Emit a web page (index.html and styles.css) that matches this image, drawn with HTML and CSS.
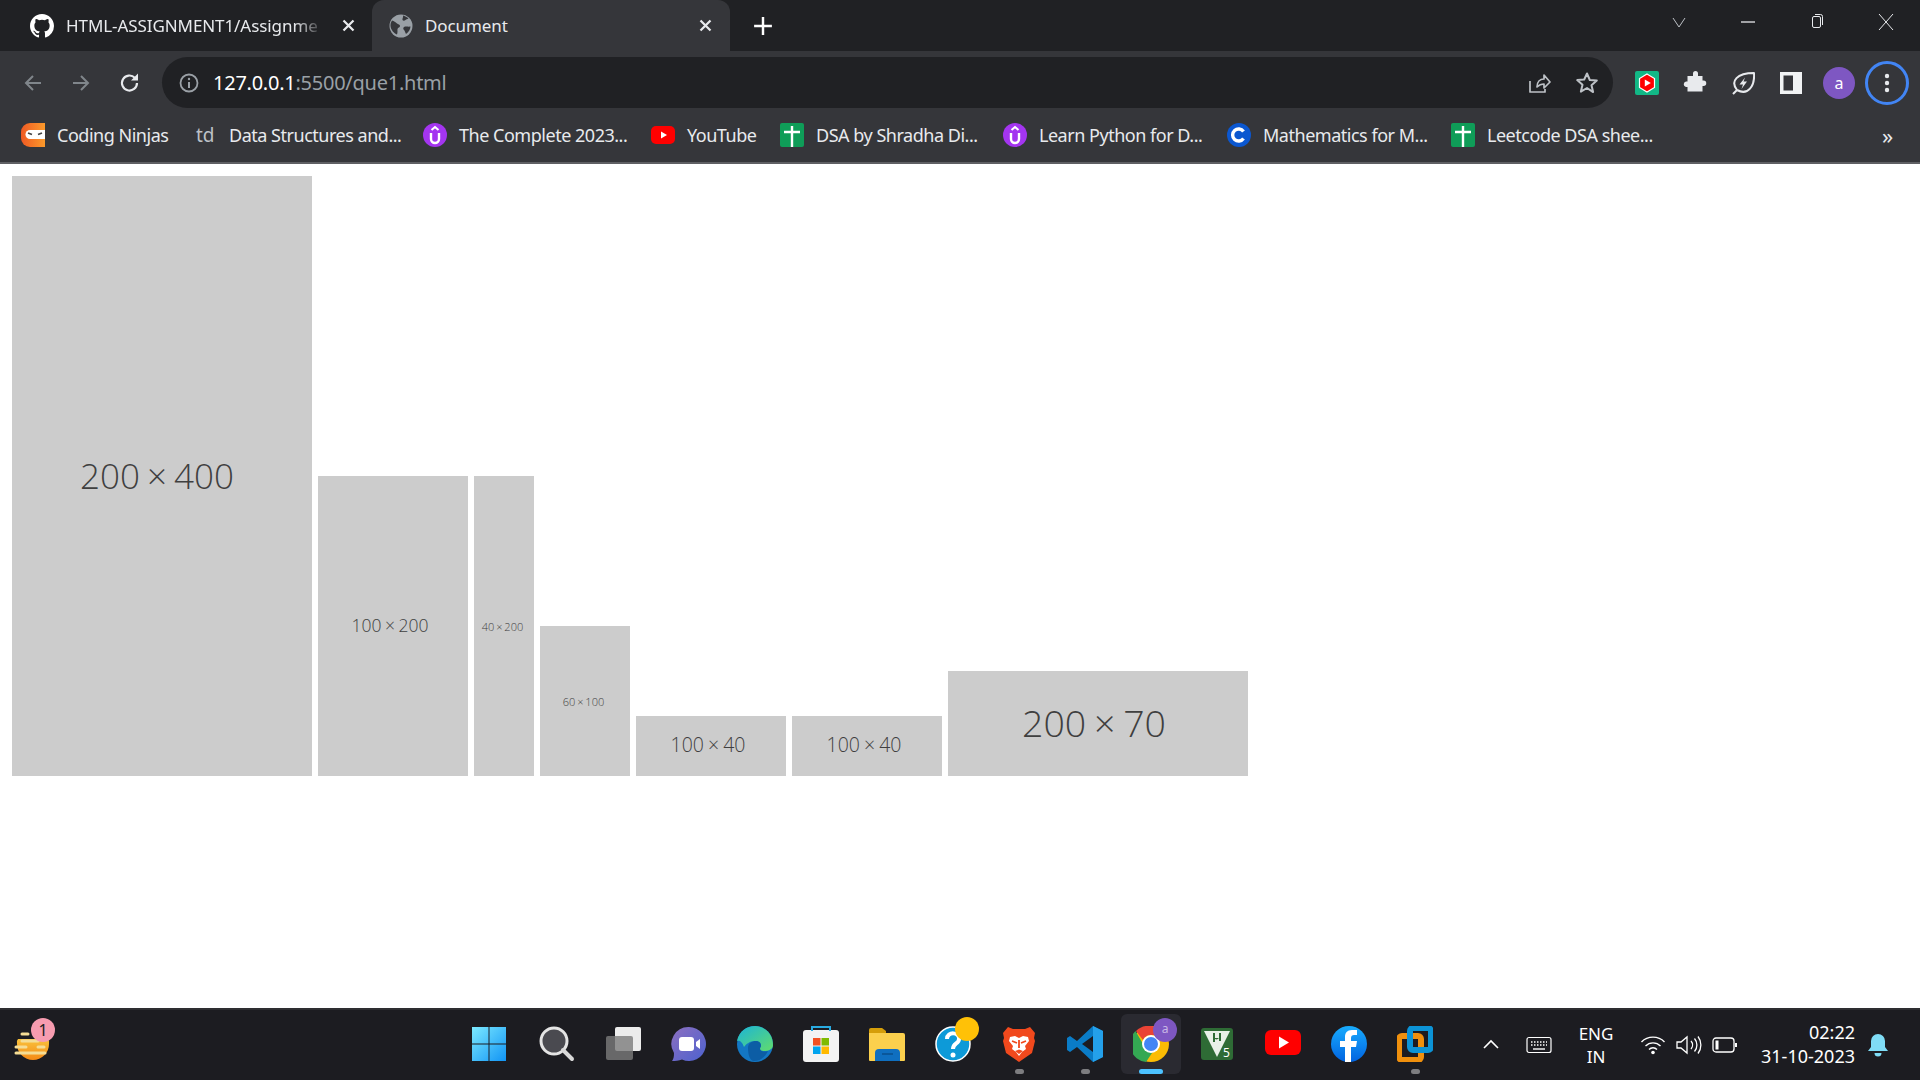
FILE: index.html
```html
<!DOCTYPE html>
<html lang="en">
<head>
<meta charset="utf-8">
<title>Document</title>
<link rel="stylesheet" href="styles.css">
</head>
<body>
<div class="screen">
  <header class="browser">
    <div class="tabstrip">
      <div class="tab">
        <svg class="fav" viewBox="0 0 16 16"><path fill="#fff" d="M8 0C3.58 0 0 3.58 0 8c0 3.54 2.29 6.53 5.47 7.59.4.07.55-.17.55-.38v-1.34c-2.23.48-2.7-1.07-2.7-1.07-.36-.92-.89-1.17-.89-1.17-.73-.5.05-.49.05-.49.8.06 1.23.83 1.23.83.71 1.22 1.87.87 2.33.66.07-.52.28-.87.5-1.07-1.77-.2-3.64-.89-3.64-3.95 0-.87.31-1.59.82-2.15-.08-.2-.36-1.02.08-2.12 0 0 .67-.21 2.2.82a7.6 7.6 0 0 1 4 0c1.53-1.04 2.2-.82 2.2-.82.44 1.1.16 1.92.08 2.12.51.56.82 1.27.82 2.15 0 3.07-1.87 3.75-3.65 3.95.29.25.54.73.54 1.48v2.2c0 .21.15.46.55.38A8 8 0 0 0 16 8c0-4.42-3.58-8-8-8z"/></svg>
        <span class="tab-title fade">HTML-ASSIGNMENT1/Assignme</span>
        <svg class="tab-x" viewBox="0 0 12 12"><path d="M2 2l8 8M10 2l-8 8" stroke="#e8eaed" stroke-width="1.8" fill="none"/></svg>
      </div>
      <div class="tab tab-active">
        <svg class="fav" viewBox="0 0 24 24"><circle cx="12" cy="12" r="11.5" fill="#9aa0a6"/><path fill="#35363a" d="M3 6.500c2 .5 3.500 1.500 5 3 1 1 3 1 3 2.500 0 1.500-2 1.500-2.500 3-.3 1.200.5 3-.5 5.500-3-1-6.500-5-6.500-9 0-2 .5-3.500 1.500-5zM14 1.500c2 .5 4 1.500 5.500 3-1.500 1-2 .5-3 1.500-1 1-2.500 1-3 0s1-3 .5-4.500zM15 13c2-1 4 0 6.500-.5-.2 3-2 6-4.500 7.500-1-2-1-3-2-4-1-.8-1-2.200 0-3z"/></svg>
        <span class="tab-title">Document</span>
        <svg class="tab-x" viewBox="0 0 12 12"><path d="M2 2l8 8M10 2l-8 8" stroke="#e8eaed" stroke-width="1.8" fill="none"/></svg>
      </div>
      <svg class="newtab" viewBox="0 0 18 18"><path d="M9 1v16M1 9h16" stroke="#fff" stroke-width="2.200" fill="none"/></svg>
      <div class="winctl">
        <svg class="wc" viewBox="0 0 18 18"><path d="M3 5l6 9 6-9" stroke="#bdc1c6" fill="none"/></svg>
        <svg class="wc" viewBox="0 0 18 18"><path d="M2 9h14" stroke="#e8eaed" stroke-width="1.300" fill="none"/></svg>
        <svg class="wc" viewBox="0 0 18 18"><rect x="4.500" y="3.500" width="8" height="11" rx="1.500" fill="#202124" stroke="#e8eaed"/><path d="M7 1.500h5.500a2 2 0 0 1 2 2V12" stroke="#e8eaed" fill="none"/></svg>
        <svg class="wc" viewBox="0 0 18 18"><path d="M2 1l14 16M16 1L2 17" stroke="#e8eaed" fill="none"/></svg>
      </div>
    </div>
    <div class="toolbar">
      <svg class="nav" viewBox="0 0 24 24"><path d="M20 12H5M12 5l-7 7 7 7" stroke="#80868b" stroke-width="2" fill="none"/></svg>
      <svg class="nav" viewBox="0 0 24 24"><path d="M4 12h15M12 5l7 7-7 7" stroke="#80868b" stroke-width="2" fill="none"/></svg>
      <svg class="nav nav-reload" viewBox="0 0 24 24"><path d="M19 12a7.500 7.500 0 1 1-2.200-5.300" stroke="#e8eaed" stroke-width="2.200" fill="none"/><path d="M20 2.500v7h-7z" fill="#e8eaed"/></svg>
      <div class="omnibox">
        <svg class="info" viewBox="0 0 20 20"><circle cx="10" cy="10" r="8.500" stroke="#9aa0a6" stroke-width="1.800" fill="none"/><path d="M10 9v6" stroke="#9aa0a6" stroke-width="2"/><circle cx="10" cy="6" r="1.200" fill="#9aa0a6"/></svg>
        <span class="url"><span class="host">127.0.0.1</span>:5500/que1.html</span>
        <span class="spacer"></span>
        <svg class="omni-ic" viewBox="0 0 24 24"><path d="M3 10v11h15v-3M10 16c0-5 3-8 7-8V4l6 7-6 6v-4c-3 0-5 1-7 3z" stroke="#bdc1c6" stroke-width="1.700" fill="none" stroke-linejoin="round"/></svg>
        <svg class="omni-ic" viewBox="0 0 24 24"><path d="M12 2.500l2.800 6.500 7 .6-5.300 4.600 1.600 6.900L12 17l-6.100 3.600 1.600-6.900-5.300-4.600 7-.6z" stroke="#bdc1c6" stroke-width="2" fill="none" stroke-linejoin="round"/></svg>
      </div>
      <div class="exts">
        <svg class="ext" viewBox="0 0 24 24"><rect width="24" height="24" rx="2" fill="#12b886"/><path d="M12 3l7.500 4.500v9L12 21l-7.500-4.500v-9z" fill="#f00" stroke="#fff" stroke-width="1.200"/><path d="M9.800 8.500l6 3.500-6 3.500z" fill="#fff"/></svg>
        <svg class="ext" viewBox="0 0 24 24"><path fill="#e8eaed" d="M10 2.500a2.500 2.500 0 0 1 5 0V5h4.500v4.500h1a2.700 2.700 0 0 1 0 5.500h-1v5.500H4.500V16H3a2.800 2.800 0 0 1 0-5.500h1.500V5H10z"/></svg>
        <svg class="ext" viewBox="0 0 24 24"><path d="M2 23l4-4M6 19C-1 10 6 2 23 2c1 13-6 23-17 17z" stroke="#e8eaed" stroke-width="2" fill="none" stroke-linejoin="round"/><path d="M14 6.500L8.500 13.500h3.500L10.500 18 16 10.500h-3.500z" fill="#e8eaed"/></svg>
        <svg class="ext" viewBox="0 0 24 24"><rect x="1" y="1" width="22" height="22" fill="#f1f3f4"/><rect x="4.500" y="4.500" width="9.500" height="15" fill="#35363a"/></svg>
        <span class="avatar">a</span>
        <span class="menu-ring"><svg class="dots" viewBox="0 0 6 22"><circle cx="3" cy="4" r="2.200" fill="#e8eaed"/><circle cx="3" cy="11" r="2.200" fill="#e8eaed"/><circle cx="3" cy="18" r="2.200" fill="#e8eaed"/></svg></span>
      </div>
    </div>
    <div class="bookmarks">
      <div class="bm"><svg class="bm-ic" viewBox="0 0 24 24"><defs><linearGradient id="cn" x1="0" y1="0" x2="1" y2="0"><stop offset="0" stop-color="#ef5a24"/><stop offset="1" stop-color="#fb9a2b"/></linearGradient></defs><path d="M9 0h15v24H9a9 9 0 0 1-9-9V9a9 9 0 0 1 9-9z" fill="url(#cn)"/><path d="M9 7h15v9H9a4.500 4.500 0 0 1 0-9z" fill="#fff"/><path d="M7 10l4 1.500M17 11.500l4-1.500" stroke="#444" stroke-width="1.800"/></svg><span>Coding Ninjas</span></div>
      <div class="bm bm-td"><span class="td">td</span><span>Data Structures and...</span></div>
      <div class="bm"><svg class="bm-ic" viewBox="0 0 24 24"><circle cx="12" cy="12" r="12" fill="#a435f0"/><path d="M8 10v6a4 4 0 0 0 8 0v-6" stroke="#fff" stroke-width="2.400" fill="none"/><path d="M8.500 7L12 4l3.500 3" stroke="#fff" stroke-width="2" fill="none"/></svg><span>The Complete 2023...</span></div>
      <div class="bm"><svg class="bm-ic" viewBox="0 0 24 24"><rect x="0" y="3" width="24" height="18" rx="5" fill="#f00"/><path d="M10 8.500l6 3.500-6 3.500z" fill="#fff"/></svg><span>YouTube</span></div>
      <div class="bm"><svg class="bm-ic" viewBox="0 0 24 24"><rect width="24" height="24" rx="2" fill="#0f9d58"/><path d="M12 3v21M4 9h16" stroke="#fff" stroke-width="2.400"/></svg><span>DSA by Shradha Di...</span></div>
      <div class="bm"><svg class="bm-ic" viewBox="0 0 24 24"><circle cx="12" cy="12" r="12" fill="#a435f0"/><path d="M8 10v6a4 4 0 0 0 8 0v-6" stroke="#fff" stroke-width="2.400" fill="none"/><path d="M8.500 7L12 4l3.500 3" stroke="#fff" stroke-width="2" fill="none"/></svg><span>Learn Python for D...</span></div>
      <div class="bm"><svg class="bm-ic" viewBox="0 0 24 24"><circle cx="12" cy="12" r="12" fill="#0b57d0"/><path d="M16.500 8.500a6 6 0 1 0 0 7" stroke="#fff" stroke-width="3.400" fill="none"/></svg><span>Mathematics for M...</span></div>
      <div class="bm"><svg class="bm-ic" viewBox="0 0 24 24"><rect width="24" height="24" rx="2" fill="#0f9d58"/><path d="M12 3v21M4 9h16" stroke="#fff" stroke-width="2.400"/></svg><span>Leetcode DSA shee...</span></div>
      <div class="chev">»</div>
    </div>
  </header>

  <main class="page">
    <div class="ph ph-a">200 × 400</div>
    <div class="ph ph-b">100 × 200</div>
    <div class="ph ph-c">40 × 200</div>
    <div class="ph ph-d">60 × 100</div>
    <div class="ph ph-e">100 × 40</div>
    <div class="ph ph-e">100 × 40</div>
    <div class="ph ph-f">200 × 70</div>
  </main>

  <footer class="taskbar">
    <div class="weather">
      <svg class="weather-ic" viewBox="0 0 40 40"><defs><linearGradient id="sun" x1="0" y1="0" x2="0" y2="1"><stop offset="0" stop-color="#f9c23c"/><stop offset="1" stop-color="#f58a16"/></linearGradient></defs><path d="M3 20a16 16 0 0 0 32 0 5 5 0 0 0-1-5H4a5 5 0 0 0-1 5z" fill="url(#sun)"/><path d="M8 10h6M8 17h16M2 23h10M2 29h29M24 23h6" stroke="#f5dd95" stroke-width="3" stroke-linecap="round"/></svg>
      <span class="badge">1</span>
    </div>
    <div class="apps">
      <div class="app app-start"><svg class="app-ic" viewBox="0 0 36 36"><defs><linearGradient id="w" x1="0" y1="0" x2="1" y2="1"><stop offset="0" stop-color="#7ceaff"/><stop offset="1" stop-color="#1194f5"/></linearGradient></defs><path fill="url(#w)" d="M1 1h16.500v16.500H1zM18.500 1H35v16.500H18.500zM1 18.500h16.500V35H1zM18.500 18.500H35V35H18.500z"/></svg></div>
      <div class="app"><svg class="app-ic" viewBox="0 0 36 36"><circle cx="15" cy="15" r="13" fill="#4a4a50" stroke="#e4e4e4" stroke-width="3"/><path d="M24 24l9 9" stroke="#d9d9d9" stroke-width="4" stroke-linecap="round"/></svg></div>
      <div class="app"><svg class="app-ic" viewBox="0 0 36 36"><rect x="10" y="1" width="26" height="24" rx="2" fill="#ececec"/><rect x="1" y="10" width="27" height="24" rx="2" fill="#7c7c7c" fill-opacity=".8"/></svg></div>
      <div class="app"><svg class="app-ic" viewBox="0 0 36 36"><defs><linearGradient id="c" x1="0" y1="0" x2="1" y2="1"><stop offset="0" stop-color="#8c6fc0"/><stop offset="1" stop-color="#4d62cf"/></linearGradient></defs><path fill="url(#c)" d="M18 1a17 17 0 1 1-7 32.500C8 35 4 35 1 35c1.500-2 2-4 2-8A17 17 0 0 1 18 1z"/><rect x="8" y="11" width="15" height="14" rx="3" fill="#fff"/><path d="M25 16l4-3v10l-4-3z" fill="#fff"/></svg></div>
      <div class="app"><svg class="app-ic" viewBox="0 0 36 36"><defs><linearGradient id="e1" x1="0" y1="0" x2="1" y2="1"><stop offset="0" stop-color="#1bb4d8"/><stop offset="1" stop-color="#61dc6c"/></linearGradient></defs><circle cx="18" cy="18" r="18" fill="#1377c4"/><path fill="url(#e1)" d="M0 15C2 5 10 0 18 0c10 0 18 8 18 19 0 4-4 6-9 6-4 0-5-2-4-3 2-2 1-7-5-7-5 0-9 3-11 6C5 15 2 14 0 15z"/><path fill="#0c5da5" d="M11 22c0-5 4-7 8-7 5 0 6 5 4 7 0 4 4 4 8 3-3 6-8 10-14 10-4 0-6-6-6-13z"/></svg></div>
      <div class="app"><svg class="app-ic" viewBox="0 0 36 36"><rect x="0" y="4" width="36" height="32" rx="3" fill="#f3f3f3"/><path d="M9 5V1h18v4" stroke="#29abe2" stroke-width="2" fill="none"/><rect x="10" y="12" width="7.500" height="7.500" fill="#f25022"/><rect x="18.500" y="12" width="7.500" height="7.500" fill="#7fba00"/><rect x="10" y="20.500" width="7.500" height="7.500" fill="#00a4ef"/><rect x="18.500" y="20.500" width="7.500" height="7.500" fill="#ffb900"/></svg></div>
      <div class="app"><svg class="app-ic" viewBox="0 0 36 36"><path d="M0 4a2 2 0 0 1 2-2h11l4 3v6H0z" fill="#d59e0a"/><path d="M0 7h34a2 2 0 0 1 2 2v25a1 1 0 0 1-1 1H1a1 1 0 0 1-1-1z" fill="#fbd04d"/><path d="M6 35V27a4 4 0 0 1 4-4h17a4 4 0 0 1 4 4v8z" fill="#0f6fc0"/><path d="M13 28h11" stroke="#0a4f8e" stroke-width="1.500"/></svg></div>
      <div class="app app-over"><svg class="app-ic" viewBox="0 0 36 36"><circle cx="18" cy="18" r="17" fill="#0d9ad8" stroke="#fff" stroke-width="1.500"/><path d="M12 13c0-8 13-7 12 0 0 5-6 4-6 10" stroke="#fff" stroke-width="4" fill="none"/><circle cx="18" cy="29" r="2.500" fill="#fff"/></svg><span class="help-dot"></span></div>
      <div class="app app-open"><svg class="app-ic" viewBox="0 0 36 36"><path d="M7 1l5 2h12l5-2 5 6-1 5 1 3-3 12-13 9-13-9-3-12 1-3-1-5z" fill="#f1491d"/><path d="M9 11l5-1 4 2 4-2 5 1 1 4-4 5 1 3-4 3-3 4-3-4-4-3 1-3-4-5z" fill="#fff"/><path d="M14 25l4-1.500 4 1.500-4 3z" fill="#f1491d"/><path d="M11 15l5 2M25 15l-5 2M18 14v8" stroke="#f1491d" stroke-width="1.800"/></svg></div>
      <div class="app app-open"><svg class="app-ic" viewBox="0 0 36 36"><path d="M26 0l10 5v26l-10 5-16-15-7 5-3-2v-12l3-2 7 5z" fill="#0a7cc7"/><path d="M26 0l10 5v26l-10 5z" fill="#24a0ea"/><path d="M26 10L15 18l11 8z" fill="#1c1c22"/></svg></div>
      <div class="app app-active"><svg class="app-ic" viewBox="0 0 36 36"><circle cx="18" cy="18" r="18" fill="#fbbc04"/><path d="M18 0a18 18 0 0 1 15.600 9H18a9 9 0 0 0-8 5L3 5A18 18 0 0 1 18 0z" fill="#ea4335"/><path d="M2.500 5L10 18a9 9 0 0 0 10 7.500L13 36A18 18 0 0 1 2.500 5z" fill="#34a853"/><circle cx="18" cy="18" r="9" fill="#fff"/><circle cx="18" cy="18" r="7" fill="#4285f4"/></svg><span class="chrome-badge">a</span></div>
      <div class="app"><svg class="app-ic ut" viewBox="0 0 32 32"><rect width="32" height="32" rx="3" fill="#2e6b35"/><path d="M3 3h26L16 29z" fill="#e8f0e8"/><path d="M12 5v9h2v-3c2 1 3 0 4-1v3h2V5h-2v5h-4V5z" fill="#2e6b35"/><text class="ut-5" x="22" y="29">5</text></svg></div>
      <div class="app"><svg class="app-ic" viewBox="0 0 36 36"><rect y="4" width="36" height="25" rx="6" fill="#f00"/><path d="M14 10.500l10 6-10 6z" fill="#fff"/></svg></div>
      <div class="app"><svg class="app-ic" viewBox="0 0 36 36"><defs><linearGradient id="f" x1="0" y1="0" x2="0" y2="1"><stop offset="0" stop-color="#18acfe"/><stop offset="1" stop-color="#0163e0"/></linearGradient></defs><circle cx="18" cy="18" r="18" fill="url(#f)"/><path d="M20 36V21h5l1-6h-6v-3c0-2 1-3 3-3h3V4h-5c-5 0-7 3-7 7v4h-5v6h5v15z" fill="#fff"/></svg></div>
      <div class="app app-open"><svg class="app-ic" viewBox="0 0 36 36"><rect x="2" y="10" width="22" height="24" rx="3" fill="none" stroke="#f0900d" stroke-width="6"/><rect x="13" y="2" width="21" height="22" rx="3" fill="none" stroke="#0c93d6" stroke-width="6"/></svg></div>
    </div>
    <div class="tray">
      <svg class="tray-ic t-up" viewBox="0 0 18 18"><path d="M2 12l7-7 7 7" stroke="#fff" stroke-width="1.600" fill="none"/></svg>
      <svg class="tray-ic t-kb" viewBox="0 0 26 18"><rect x="1" y="1.500" width="24" height="15" rx="2" stroke="#fff" stroke-width="1.200" fill="none"/><path d="M5 6h16M5 9h16" stroke="#fff" stroke-width="1.400" stroke-dasharray="1.500 1.500"/><path d="M7 13h12" stroke="#fff" stroke-width="1.400"/></svg>
      <div class="lang"><span>ENG</span><span>IN</span></div>
      <svg class="tray-ic t-wifi" viewBox="0 0 26 20"><path d="M1.500 7a16 16 0 0 1 23 0M5.500 11a10.500 10.500 0 0 1 15 0M9 14.500a5.500 5.500 0 0 1 8 0" stroke="#fff" stroke-width="1.400" fill="none"/><circle cx="13" cy="17.500" r="1.800" fill="#fff"/></svg>
      <svg class="tray-ic t-vol" viewBox="0 0 26 20"><path d="M1 7v6h4l6 5V2L5 7z" stroke="#fff" stroke-width="1.300" fill="none"/><path d="M15 6a6 6 0 0 1 0 8M18.500 3.500a10 10 0 0 1 0 13M22 1.500a14 14 0 0 1 0 17" stroke="#fff" stroke-width="1.300" fill="none"/></svg>
      <svg class="tray-ic t-bat" viewBox="0 0 26 18"><rect x="1" y="2" width="21" height="14" rx="3" stroke="#fff" stroke-width="1.300" fill="none"/><rect x="3.500" y="4.500" width="3" height="9" fill="#fff"/><path d="M23 7h2v4h-2z" fill="#fff"/></svg>
      <div class="clock"><span>02:22</span><span>31-10-2023</span></div>
      <svg class="tray-ic t-bell" viewBox="0 0 20 24"><path d="M10 1a7 7 0 0 1 7 7v6l3 4H0l3-4V8a7 7 0 0 1 7-7z" fill="#7fdcf6"/><path d="M6.500 20h7a3.500 3.500 0 0 1-7 0z" fill="#7fdcf6"/></svg>
    </div>
  </footer>
</div>
</body>
</html>
```
FILE: styles.css
```css
* { box-sizing: border-box; }
html, body { margin: 0; padding: 0; }
body { width: 1920px; height: 1080px; overflow: hidden; background: #fff; font-family: "Noto Sans", "Open Sans", sans-serif; }
.screen { display: flex; flex-direction: column; width: 1920px; height: 1080px; }

.browser { height: 164px; background: #35363a; border-bottom: 2px solid #5f6064; flex: none; }
.tabstrip { display: flex; align-items: center; height: 51px; background: #202124; padding-left: 12px; position: relative; }
.tab { display: flex; align-items: center; width: 360px; height: 51px; padding: 0 16px 0 18px; color: #e8eaed; font-size: 17px; }
.tab-active { background: #35363a; border-radius: 12px 12px 0 0; width: 358px; margin-left: 0; padding-right: 17px; }
.fav { width: 24px; height: 24px; flex: none; margin-right: 12px; }
.tab-active .fav { margin-left: -1px; }
.tab-title { flex: 1; min-width: 0; white-space: nowrap; letter-spacing: -0.08px; }
.fade { -webkit-mask-image: linear-gradient(to right, #000 88%, transparent 100%); mask-image: linear-gradient(to right, #000 88%, transparent 100%); }
.tab-x { width: 15px; height: 15px; flex: none; margin-left: 16px; }
.newtab { width: 20px; height: 20px; margin-left: 23px; flex: none; }
.winctl { margin-left: auto; display: flex; align-items: center; height: 44px; align-self: flex-start; padding-right: 25px; gap: 51px; }
.wc { width: 18px; height: 18px; }

.toolbar { display: flex; align-items: center; height: 63px; padding: 6px 0 6px 21px; }
.nav { width: 24px; height: 24px; margin-right: 24px; flex: none; }
.nav-reload { margin-left: 1px; margin-right: 23px; }
.omnibox { display: flex; align-items: center; width: 1451px; height: 51px; margin-left: -3px; border-radius: 26px; background: #202124; padding: 0 14px 0 17px; }
.info { width: 20px; height: 20px; margin-right: 14px; flex: none; }
.url { color: #9aa0a6; font-size: 20px; letter-spacing: -0.25px; white-space: nowrap; }
.host { color: #fff; }
.spacer { flex: 1; }
.omni-ic { width: 24px; height: 24px; margin-left: 24px; flex: none; }
.exts { display: flex; align-items: center; margin-left: 22px; gap: 24px; }
.ext { width: 24px; height: 24px; flex: none; }
.avatar { display: flex; align-items: center; justify-content: center; width: 32px; height: 32px; flex: none; margin: 0 -4px; border-radius: 50%; background: #7e57c2; color: #fff; font-size: 16px; }
.menu-ring { display: flex; align-items: center; justify-content: center; width: 44px; height: 44px; margin-left: -10px; border-radius: 50%; border: 3px solid #4285f4; }
.dots { width: 6px; height: 22px; }

.bookmarks { display: grid; grid-template-columns: 163px 239px 228px 129px 223px 224px 224px 424px 1fr; height: 48px; padding: 0 0 6px 21px; align-items: center; color: #e8eaed; font-size: 18px; letter-spacing: -0.48px; }
.bm { display: flex; align-items: center; gap: 12px; white-space: nowrap; }
.bm-ic { width: 24px; height: 24px; flex: none; }
.bm-td { padding-left: 12px; gap: 14px; }
.td { color: #bdc1c6; font-size: 19px; width: 19px; letter-spacing: 0; }
.chev { font-size: 22px; padding-left: 7px; letter-spacing: 0; }

.page { flex: 1; display: flex; align-items: flex-end; gap: 6px; padding: 12px 12px 232px; background: #fff; }
.ph { display: flex; align-items: center; justify-content: center; flex: none; background: #ccc; color: #3f3f3f; font-family: "Open Sans", sans-serif; font-weight: 300; white-space: nowrap; }
.ph-a { width: 300px; height: 600px; font-size: 35px; word-spacing: -2px; padding: 0 10px 2px 0; }
.ph-b { width: 150px; height: 300px; font-size: 17.500px; word-spacing: -1px; padding: 0 6px 3px 0; }
.ph-c { width: 60px; height: 300px; font-size: 11px; word-spacing: -1px; padding: 0 3px 0 0; }
.ph-d { width: 90px; height: 150px; font-size: 11px; word-spacing: -1px; padding: 0 3px 0 0; }
.ph-e { width: 150px; height: 60px; font-size: 19.500px; word-spacing: -1px; padding: 0 6px 3px 0; }
.ph-f { width: 300px; height: 105px; font-size: 37.500px; word-spacing: -2px; padding: 0 8px 2px 0; }

.taskbar { flex: none; display: flex; align-items: center; height: 72px; padding-bottom: 2px; background: #1c1c21; border-top: 2px solid #2e2e31; position: relative; }
.weather { position: absolute; left: 14px; top: 8px; width: 42px; height: 56px; }
.weather-ic { position: absolute; left: 0; top: 6px; width: 40px; height: 40px; }
.badge { position: absolute; left: 17px; top: 0; width: 24px; height: 24px; border-radius: 50%; background: #f79cb0; color: #222; font-size: 16px; line-height: 24px; text-align: center; }
.apps { display: flex; margin-left: 456px; }
.app { position: relative; display: flex; align-items: center; justify-content: center; width: 66px; height: 60px; }
.app-start { width: 68px; justify-content: flex-start; padding-left: 15px; }
.app-ic { width: 36px; height: 36px; }
.ut { width: 32px; height: 32px; }
.ut-5 { fill: #fff; font-size: 12px; font-family: "Noto Sans", sans-serif; }
.app-open::after { content: ""; position: absolute; bottom: 0; left: 29px; width: 9px; height: 5px; border-radius: 3px; background: #7d7d80; }
.app-active { background: #2a2a31; border-radius: 6px; width: 60px; margin: 0 3px; }
.app-active::after { content: ""; position: absolute; bottom: 0; left: 18px; width: 24px; height: 5px; border-radius: 3px; background: #4cc2ff; }
.help-dot { position: absolute; left: 35px; top: 3px; width: 24px; height: 24px; border-radius: 50%; background: #ffc107; }
.chrome-badge { position: absolute; left: 32px; top: 4px; width: 24px; height: 24px; border-radius: 50%; background: #7e57c2; color: #c9b8e6; font-size: 12px; line-height: 22px; text-align: center; }
.tray { display: flex; align-items: center; position: absolute; left: 0; top: 0; width: 100%; height: 70px; pointer-events: none; }
.tray-ic { flex: none; }
.t-up { width: 18px; height: 18px; margin-left: 1482px; }
.t-kb { width: 26px; height: 18px; margin-left: 26px; }
.lang { display: flex; flex-direction: column; align-items: center; width: 50px; margin-left: 19px; color: #fff; font-size: 17px; line-height: 23px; }
.t-wifi { width: 26px; height: 20px; margin-left: 19px; }
.t-vol { width: 26px; height: 20px; margin-left: 10px; }
.t-bat { width: 26px; height: 18px; margin-left: 10px; }
.clock { display: flex; flex-direction: column; align-items: flex-end; width: 107px; margin: -2px 0 0 10px; color: #fff; font-size: 18px; line-height: 24px; }
.t-bell { width: 20px; height: 24px; margin-left: 13px; }
```
